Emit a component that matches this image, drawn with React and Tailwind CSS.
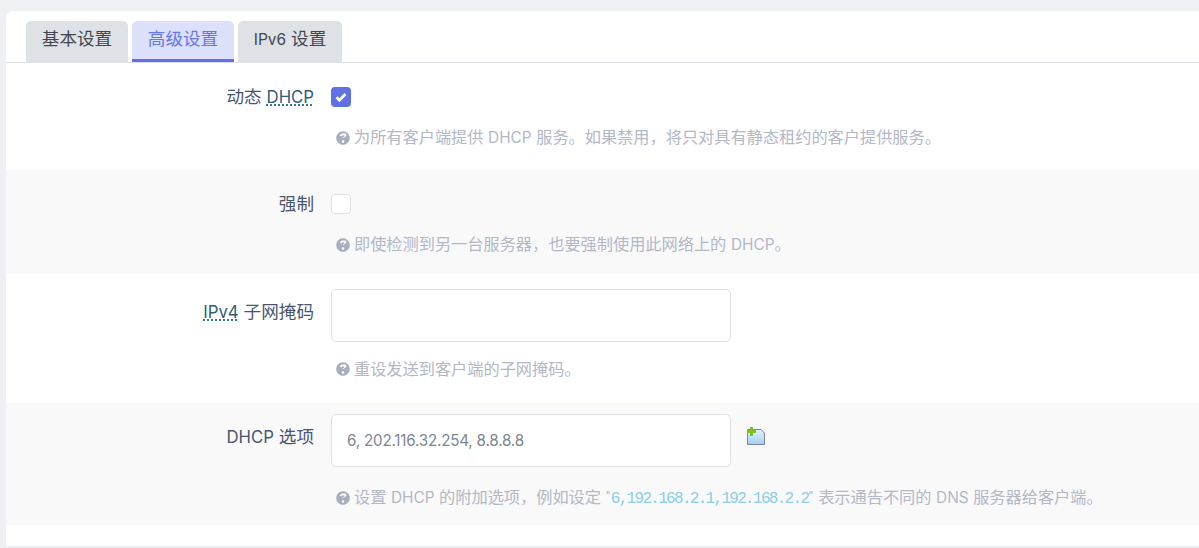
import React from 'react';

const FONT = "font-['Inter','Noto_Sans_CJK_SC',sans-serif]";

// latin text sits a bit smaller than the CJK next to it
function L({ children }) {
  return <span className="text-[0.95em]">{children}</span>;
}

function HelpIcon() {
  return (
    <svg viewBox="0 0 512 512" className="w-[14px] h-[14px] shrink-0 mr-[4px] fill-[#a9aebf]">
      <path d="M504 256c0 137-111 248-248 248S8 393 8 256 119 8 256 8s248 111 248 248zM262.700 90c-54.500 0-89.300 23-116.500 63.800-3.500 5.300-2.400 12.400 2.700 16.300l34.700 26.300c5.200 3.900 12.600 3 16.700-2.100 17.900-22.700 30.100-35.800 57.300-35.800 20.400 0 45.700 13.100 45.700 33 0 15-12.400 22.700-32.600 34-23.600 13.200-54.800 29.700-54.800 70.900V240c0 0 0 0 0 0v8c0 6.600 5.400 12 12 12h56c6.600 0 12-5.400 12-12v-1.300c0-28.600 83.500-29.800 83.500-107.100C380 83.400 319.700 90 262.700 90zM256 338c-25.400 0-46 20.600-46 46s20.600 46 46 46 46-20.600 46-46-20.600-46-46-46z" />
    </svg>
  );
}

function Hint({ children }) {
  return (
    <div className="flex items-center ml-[5px] text-[16.2px] leading-[22px] text-[#b3b7c6]">
      <HelpIcon />
      <span>{children}</span>
    </div>
  );
}

function Abbr({ children }) {
  return (
    <span className="text-[#2f6078] underline decoration-dotted decoration-[#0f6f80] underline-offset-[2px]">
      <L>{children}</L>
    </span>
  );
}

function Row({ label, hint, shaded, className, labelClass, children }) {
  return (
    <div className={`flex ${shaded ? 'bg-[#f9f9fa]' : 'bg-white'} ${className}`}>
      <div className={`w-[308px] shrink-0 text-right text-[17.6px] text-[#4a5670] ${labelClass}`}>{label}</div>
      <div className="ml-[17px] flex-1">
        {children}
        <Hint>{hint}</Hint>
      </div>
    </div>
  );
}

function PlusFile() {
  return (
    <svg viewBox="0 0 18 18" className="w-[18px] h-[18px] ml-[16px] mt-[13px]">
      <defs>
        <linearGradient id="fileFill" x1="0" y1="0" x2="0" y2="1">
          <stop offset="0" stopColor="#e4f1fd" />
          <stop offset="1" stopColor="#a5cdf5" />
        </linearGradient>
      </defs>
      <path d="M0.500 2.500H14l3.500 3.500v11.500h-17z" fill="url(#fileFill)" stroke="#76899f" />
      <path d="M3 0h3v3H9v3H6v3H3V6H0V3h3z" fill="#7cc024" />
    </svg>
  );
}

function Tab({ children, active }) {
  return (
    <div
      className={`h-[41px] px-[15.8px] rounded-t-[5px] flex items-center text-[17.6px] ${
        active
          ? 'bg-[#dce0fb] text-[#6876ea] border-b-[3px] border-[#5e72e4] pb-[1px]'
          : 'bg-[#dee2e6] text-[#43474d] pb-[4px]'
      }`}
    >
      <span>{children}</span>
    </div>
  );
}

export default function App() {
  return (
    <div className={`h-[548px] overflow-hidden bg-[#eef0f3] pt-[11px] pl-[6px] ${FONT}`}>
      <div className="h-[535px] bg-white rounded-tl-[7px]">
        <div className="flex gap-[4px] pl-[20px] pt-[10px] h-[52px] border-b border-[#dee2e6]">
          <Tab>基本设置</Tab>
          <Tab active>高级设置</Tab>
          <Tab><span className="text-[0.88em]">IPv6</span> 设置</Tab>
        </div>

        <Row
          className="h-[107px] pt-[24px]"
          labelClass="leading-[24px] -mt-[2px]"
          label={<>动态 <Abbr>DHCP</Abbr></>}
          hint={<>为所有客户端提供 <L>DHCP</L> 服务。如果禁用，将只对具有静态租约的客户提供服务。</>}
        >
          <div className="w-[20px] h-[20px] rounded-[4px] bg-[#5e72e4] flex items-center justify-center mb-[19px]">
            <svg viewBox="0 0 12 12" className="w-[12px] h-[12px] fill-none stroke-white stroke-[2.800]">
              <path d="M1.500 6.200l3 3 6-6.200" />
            </svg>
          </div>
        </Row>

        <Row
          shaded
          className="h-[104px] pt-[24px]"
          labelClass="leading-[24px] -mt-[2px]"
          label="强制"
          hint={<>即使检测到另一台服务器，也要强制使用此网络上的 <L>DHCP</L>。</>}
        >
          <div className="w-[20px] h-[20px] rounded-[4px] bg-white border border-[#dee2e6] mb-[19px]" />
        </Row>

        <Row
          className="h-[129px] pt-[15px]"
          labelClass="pt-[11px] leading-[24px]"
          label={<><Abbr>IPv4</Abbr> 子网掩码</>}
          hint="重设发送到客户端的子网掩码。"
        >
          <input className="block w-[400px] h-[53px] rounded-[5px] border border-[#dee2e6] bg-white mb-[16px] outline-none" />
        </Row>

        <Row
          shaded
          className="h-[122px] pt-[11px]"
          labelClass="pt-[11px] leading-[24px]"
          label={<><L>DHCP</L> 选项</>}
          hint={
            <>
              设置 <L>DHCP</L> 的附加选项，例如设定 <span className="text-[0.7em] align-[3px]">"</span>
              <code className="font-['Liberation_Mono','Noto_Sans_CJK_SC',monospace] text-[16px] tracking-[-1.7px] text-[#8ccde8]">6,192.168.2.1,192.168.2.2</code>
              <span className="text-[0.7em] align-[3px]">"</span> 表示通告不同的 <L>DNS</L> 服务器给客户端。
            </>
          }
        >
          <div className="flex mb-[18px]">
            <input
              defaultValue="6, 202.116.32.254, 8.8.8.8"
              className="block w-[400px] h-[53px] rounded-[5px] border border-[#dee2e6] bg-white px-[15px] text-[15.2px] tracking-[-0.2px] text-[#7b8794] outline-none"
            />
            <PlusFile />
          </div>
        </Row>
      </div>
    </div>
  );
}
